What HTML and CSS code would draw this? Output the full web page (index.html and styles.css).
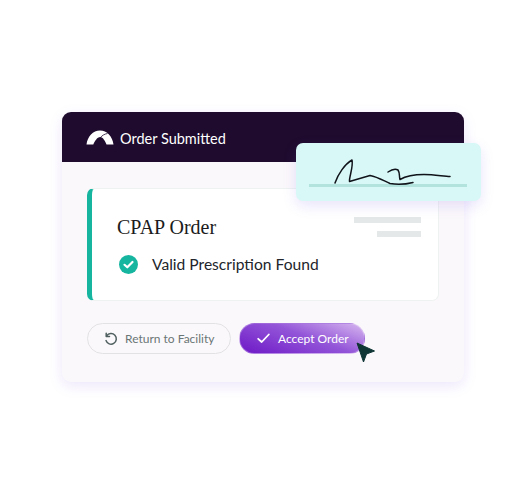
FILE: index.html
```html
<!DOCTYPE html>
<html lang="en">
<head>
<meta charset="utf-8">
<title>Order Submitted</title>
<link rel="stylesheet" href="styles.css">
</head>
<body>
<main class="window">
  <header class="window-head">
    <svg class="logo" width="28" height="15" viewBox="0 0 28 15"><path d="M0.500 14.500C1.500 6.500 7 0.500 14 0.500S26.500 6.500 27.500 14.500H20.500C19.300 11.500 17 7 14.300 7C11 7 8.700 11.500 7.300 14.500Z" fill="#fff"/><path d="M14.500 7.500C16 5.500 18.500 4 21.500 3.500" fill="none" stroke="#1f0c2e" stroke-width="0.800"/></svg>
    <span class="head-title">Order Submitted</span>
  </header>
  <div class="window-body">
    <section class="order-card">
      <div class="order-main">
        <h1 class="order-title">CPAP Order</h1>
        <div class="status">
          <svg class="status-icon" width="19" height="19" viewBox="0 0 19 19"><circle cx="9.500" cy="9.500" r="9.500" fill="#16b5a0"/><path d="M5.500 9.800L8.300 12.300L13.500 7" fill="none" stroke="#fff" stroke-width="2.200" stroke-linecap="round" stroke-linejoin="round"/></svg>
          <span>Valid Prescription Found</span>
        </div>
      </div>
      <div class="order-lines">
        <span class="line line-long"></span>
        <span class="line line-short"></span>
      </div>
    </section>
    <div class="actions">
      <button class="btn btn-return">
        <svg width="14" height="14" viewBox="0 0 14 14"><path d="M2.700 3.800A5.300 5.300 0 1 1 2 8.600" fill="none" stroke="#4f5f5f" stroke-width="1.500" stroke-linecap="round"/><path d="M2.200 1.200V4.500H5.500" fill="none" stroke="#4f5f5f" stroke-width="1.500" stroke-linecap="round" stroke-linejoin="round"/></svg>
        <span>Return to Facility</span>
      </button>
      <button class="btn btn-accept">
        <svg width="13" height="11" viewBox="0 0 13 11"><path d="M1.200 5.800L4.700 9L11.800 1.500" fill="none" stroke="#fff" stroke-width="1.800" stroke-linecap="round" stroke-linejoin="round"/></svg>
        <span>Accept Order</span>
      </button>
    </div>
  </div>
  <div class="signature">
    <span class="sig-line"></span>
    <svg class="sig-ink" width="185" height="58" viewBox="0 0 185 58"><path d="M39 40C42 31 49 21 56 17C57.500 24 53 34 53.500 38.500L74 32.500C82 34 88 38 94 40.500C102 42 111 41 117 39.500" fill="none" stroke="#10131a" stroke-width="1.500" stroke-linecap="round" stroke-linejoin="round"/><path d="M92 29C95 27 99 25.500 102 27C104 30 103 33 104 36.500C110 33 118 31.500 128 31.500C139 31.500 148 33.500 154 33.500" fill="none" stroke="#10131a" stroke-width="1.500" stroke-linecap="round" stroke-linejoin="round"/></svg>
  </div>
  <svg class="pointer" width="20" height="22" viewBox="0 0 20 22"><path d="M1 1L18.500 9L10.500 12L7.500 20Z" fill="#0f3535" stroke="#0f3535" stroke-linejoin="round"/></svg>
</main>
</body>
</html>
```
FILE: styles.css
```css
* { box-sizing: border-box; }
html, body { margin: 0; height: 100%; background: #fff; }
body {
  padding: 112px 62px 0;
  font-family: Lato, "Liberation Sans", sans-serif;
  overflow: hidden;
}
.window {
  position: relative;
  width: 402px;
  height: 270px;
  border-radius: 9px;
  background: #fbf8fb;
  box-shadow: 0 4px 14px rgba(130, 80, 230, 0.14);
}
.window-head {
  display: flex;
  align-items: center;
  gap: 6px;
  height: 50px;
  padding: 0 0 0 24px;
  background: #1e0b2d;
  border-radius: 9px 9px 0 0;
  color: #fff;
}
.logo { flex: none; }
.head-title { font-size: 14.500px; line-height: 18px; margin-top: 4px; }
.window-body { padding: 26px 25px 0; }
.order-card {
  display: flex;
  justify-content: space-between;
  width: 352px;
  height: 113px;
  padding: 0 17px 0 25px;
  background: #fff;
  border: 1px solid #eef2f0;
  border-left: 5px solid #16b5a0;
  border-radius: 7px;
}
.order-main { padding-top: 26px; }
.order-title {
  margin: 0;
  font-family: "Liberation Serif", serif;
  font-size: 20px;
  font-weight: 400;
  line-height: 24px;
  color: #1b1b20;
}
.status {
  display: flex;
  align-items: center;
  gap: 14px;
  margin-top: 15px;
  margin-left: 2px;
  font-size: 15.600px;
  line-height: 20px;
  color: #22252b;
}
.order-lines {
  display: flex;
  flex-direction: column;
  align-items: flex-end;
  gap: 8px;
  padding-top: 28px;
}
.line { display: block; background: #e5e8e8; height: 6px; }
.line-long { width: 67px; }
.line-short { width: 44px; }
.actions { display: flex; gap: 8px; margin-top: 22px; }
.btn {
  display: flex;
  align-items: center;
  height: 31px;
  margin: 0;
  border-radius: 16px;
  font-family: inherit;
  font-size: 12px;
  cursor: pointer;
}
.btn-return {
  width: 144px;
  gap: 7px;
  padding: 0 0 0 16px;
  background: transparent;
  border: 1.500px solid #e2e2e4;
  color: #6a7676;
}
.btn-accept {
  width: 126px;
  gap: 8px;
  padding: 0 0 0 17px;
  border: 1px solid rgba(255, 255, 255, 0.3);
  background: linear-gradient(20deg, #6d18c6 0%, #9355d8 55%, #d6b6ef 100%);
  color: #fff;
}
.signature {
  position: absolute;
  left: 234px;
  top: 31px;
  width: 185px;
  height: 58px;
  background: #d7f8f6;
  border-radius: 7px;
  box-shadow: 0 5px 14px rgba(120, 90, 230, 0.16);
}
.sig-line {
  position: absolute;
  left: 13px;
  top: 41px;
  width: 158px;
  height: 3px;
  background: #b2e3dd;
}
.sig-ink { position: absolute; left: 0; top: 0; }
.pointer { position: absolute; left: 294px; top: 230px; }
```
